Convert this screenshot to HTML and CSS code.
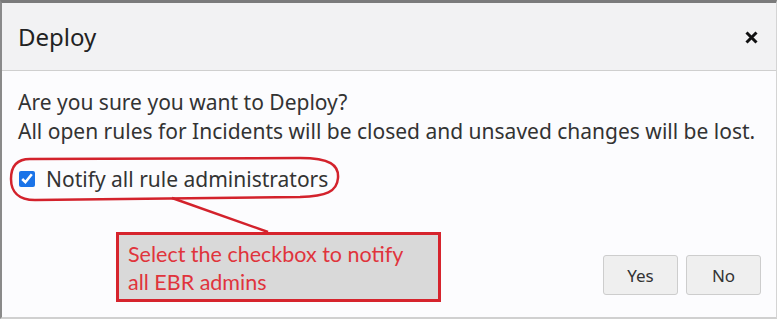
FILE: index.html
```html
<!DOCTYPE html>
<html lang="en">
<head>
  <meta charset="UTF-8" />
  <title>Deploy</title>
  <link rel="stylesheet" href="styles.css">
</head>
<body>
  <div class="dialog">
    <div class="dialog-header">
      <span class="dialog-title">Deploy</span>
      <svg class="close-btn" width="13" height="13" viewBox="0 0 13 13">
        <path d="M1.5 1.5 L11.5 11.5 M11.5 1.5 L1.5 11.5" />
      </svg>
    </div>
    <div class="dialog-body">
      <p class="message">Are you sure you want to Deploy?<br />All open rules for Incidents will be closed and unsaved changes will be lost.</p>
      <label class="notify"><input type="checkbox" checked /> Notify all rule administrators</label>
    </div>
    <div class="dialog-footer">
      <button>Yes</button>
      <button>No</button>
    </div>

    <svg class="marks" width="777" height="319" viewBox="0 0 777 319">
      <path d="M30 159 L300 158 C330 158 339 165 338 178 C337 192 326 196 300 197 L35 200 C18 200 11 191 11 179 C11 166 17 159 30 159 Z" />
      <line x1="172" y1="198" x2="268" y2="232" />
    </svg>
    <div class="callout">Select the checkbox to notify<br />all EBR admins</div>
  </div>
</body>
</html>
```

FILE: styles.css
```css
* { box-sizing: border-box; }
body {
  margin: 0;
  background: #fff;
  font-family: 'Noto Sans', sans-serif;
}
.dialog {
  position: relative;
  width: 777px;
  height: 319px;
  background: #fcfcfe;
  border-top: 3px solid #7b7b7b;
  border-left: 2px solid #8a8a8a;
  border-right: 1px solid #d4d4d4;
  border-bottom: 2px solid #d0d0d0;
  display: flex;
  flex-direction: column;
}
.dialog-header {
  height: 68px;
  background: #f2f2f3;
  border-bottom: 1px solid #cfcfcf;
  display: flex;
  align-items: center;
  justify-content: space-between;
  padding: 0 18px 0 16px;
}
.dialog-title {
  font-size: 24px;
  color: #222;
}
.close-btn {
  fill: none;
  stroke: #111;
  stroke-width: 3;
  margin-top: 2px;
}
.dialog-body {
  padding: 17px 16px 0;
  flex: 1;
}
.message {
  margin: 0;
  font-size: 21px;
  line-height: 29px;
  color: #333;
}
.notify {
  display: flex;
  align-items: center;
  margin-top: 19px;
  font-size: 21px;
  color: #333;
}
.notify input {
  width: 16px;
  height: 16px;
  margin: 0 11px 0 1px;
  accent-color: #1a73e8;
}
.dialog-footer {
  display: flex;
  justify-content: flex-end;
  gap: 8px;
  padding: 0 15px 22px;
}
.dialog-footer button {
  width: 75px;
  height: 40px;
  background: #efefef;
  border: 1px solid #cdcdcd;
  border-radius: 3px;
  font-family: 'Noto Sans', sans-serif;
  font-size: 17px;
  color: #333;
}
.marks {
  position: absolute;
  top: -3px;
  left: -2px;
  fill: none;
  stroke: #d3222c;
  stroke-width: 2.5;
  pointer-events: none;
}
.callout {
  position: absolute;
  top: 229px;
  left: 114px;
  width: 325px;
  height: 70px;
  background: #d9d9d9;
  border: 3px solid #d6242d;
  padding: 5px 9px;
  font-family: 'Lato', sans-serif;
  font-size: 21.5px;
  line-height: 28px;
  color: #e0343c;
}
```
